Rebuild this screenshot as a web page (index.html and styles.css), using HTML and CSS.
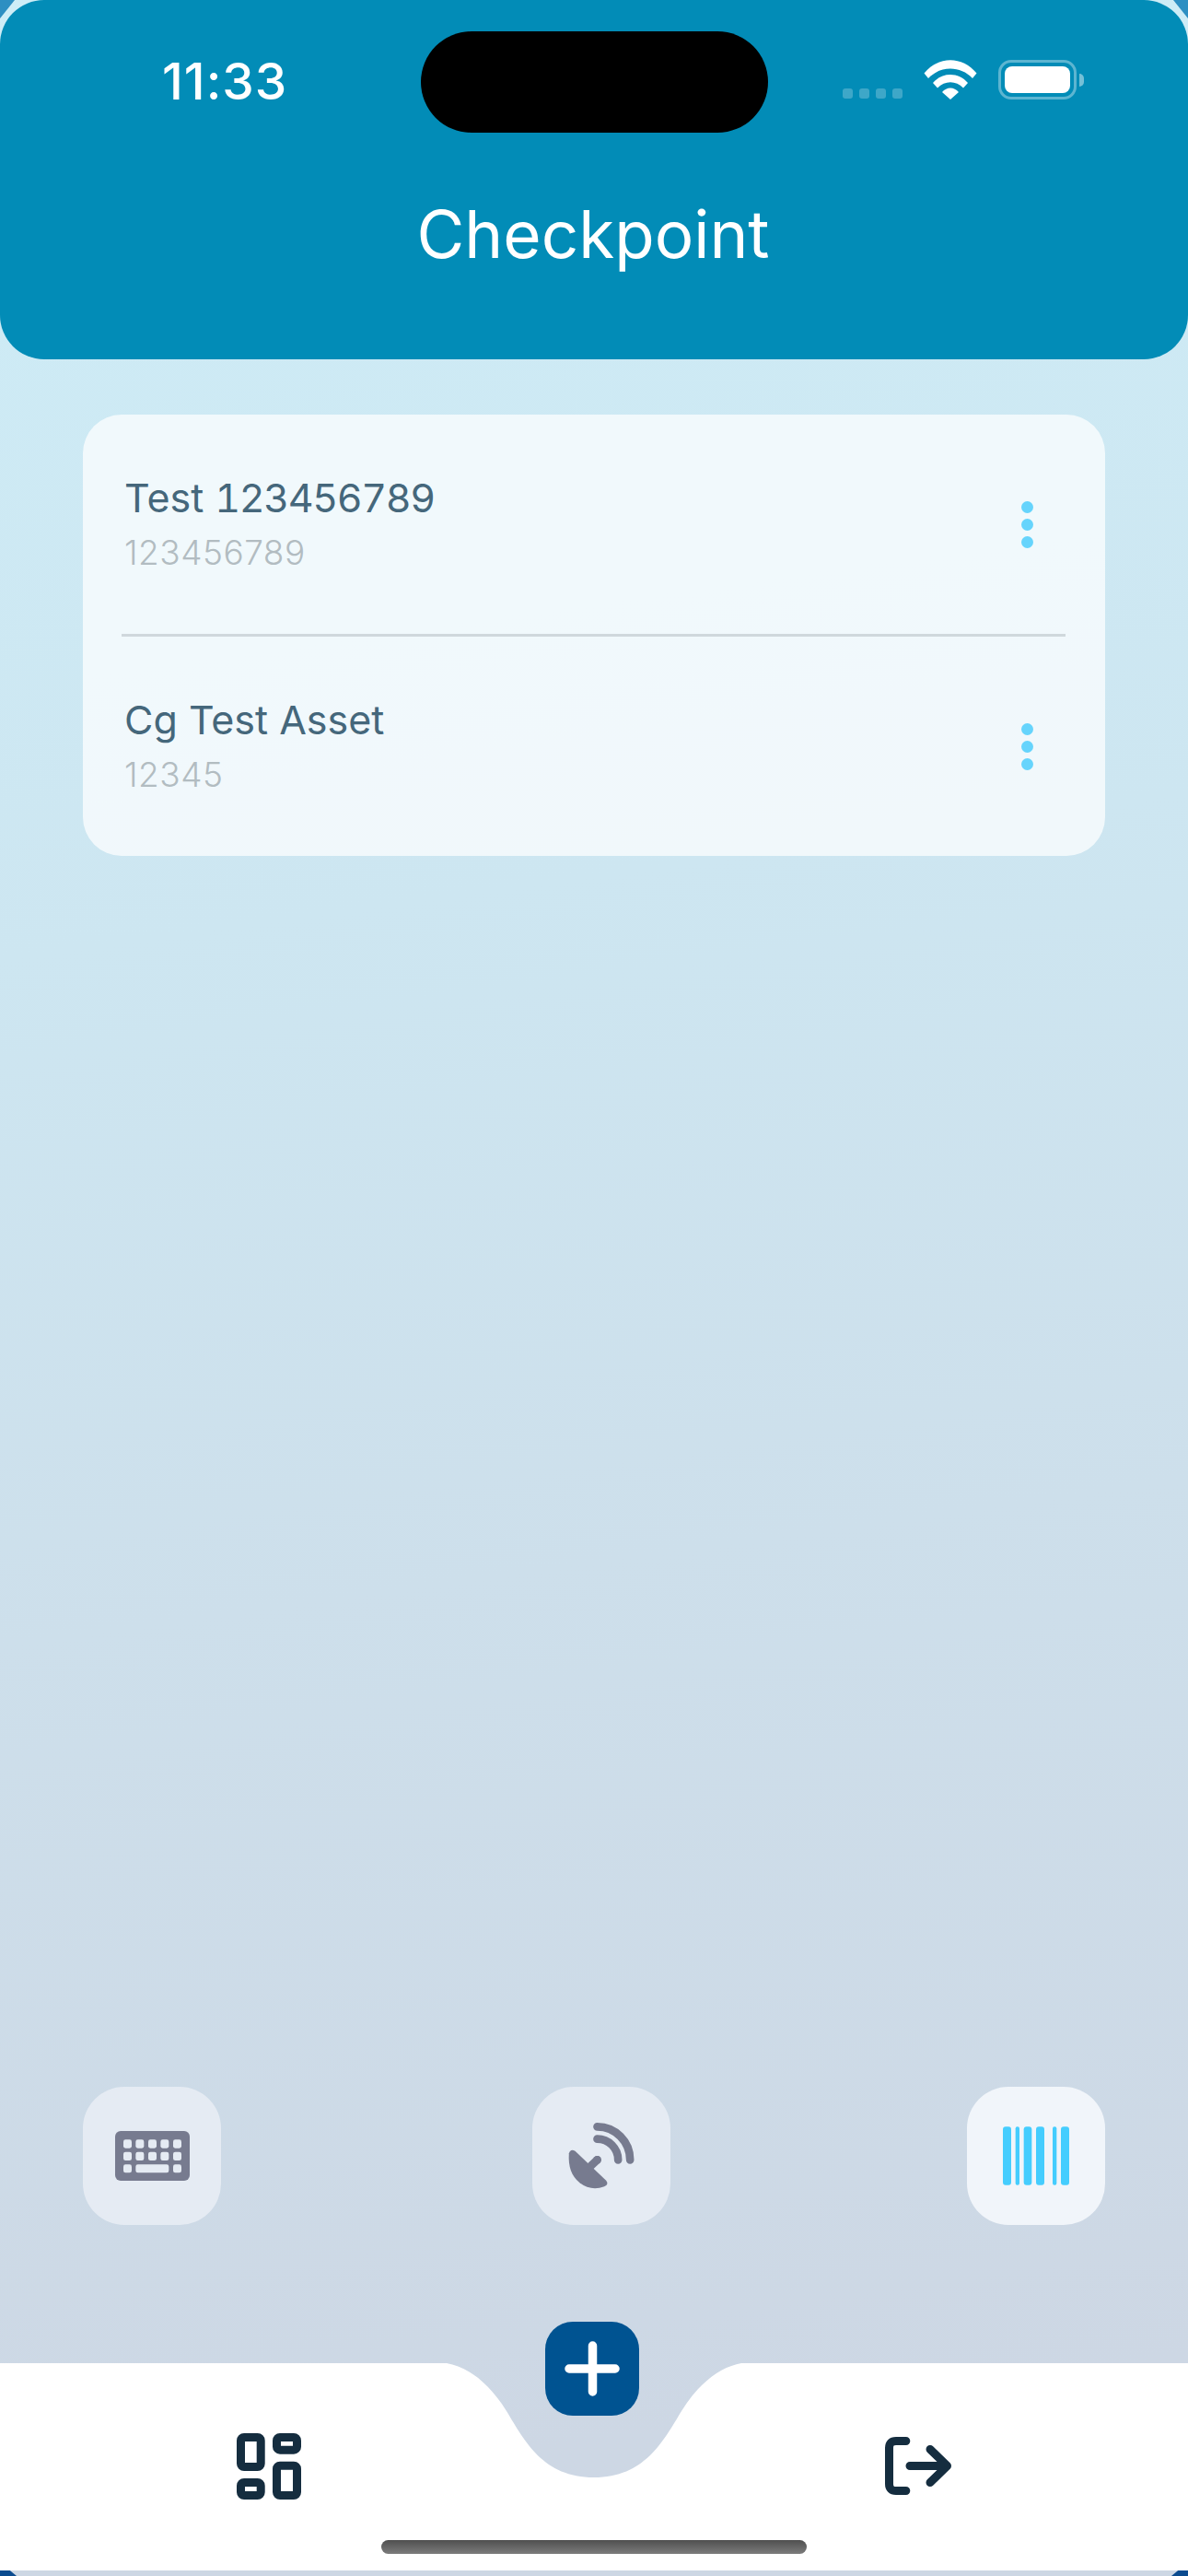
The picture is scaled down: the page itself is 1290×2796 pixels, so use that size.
FILE: index.html
```html
<!DOCTYPE html>
<html lang="en">
<head>
<meta charset="utf-8">
<title>Checkpoint</title>
<link rel="stylesheet" href="styles.css">
</head>
<body>
<div class="screen">
  <header class="header">
    <div class="status">
      <span class="time">11:33</span>
      <div class="island"></div>
      <div class="status-icons">
        <div class="signal"><i></i><i></i><i></i><i></i></div>
        <svg class="wifi" width="58" height="43" viewBox="0 0 58 43"><path fill="#fff" d="M0.5 14.5 C16 -4.5 42 -4.5 57.5 14.5 L53 20 C40 6 18 6 5 20 Z M10 25 C20 13 38 13 48 25 L43 30.5 C35 22 23 22 15 30.5 Z M20 35 C25 29 33 29 38 35 L29 43 Z"/></svg>
        <div class="battery"><div class="battery-body"><div class="battery-fill"></div></div><div class="battery-tip"></div></div>
      </div>
    </div>
    <h1 class="title">Checkpoint</h1>
  </header>

  <section class="card">
    <div class="row">
      <div class="row-text">
        <div class="row-name">Test <span class="digits">123456789</span></div>
        <div class="row-code">123456789</div>
      </div>
      <div class="dots"><i></i><i></i><i></i></div>
    </div>
    <div class="divider"></div>
    <div class="row">
      <div class="row-text">
        <div class="row-name">Cg Test Asset</div>
        <div class="row-code">12345</div>
      </div>
      <div class="dots"><i></i><i></i><i></i></div>
    </div>
  </section>

  <div class="actions">
    <button class="action">
      <svg width="81" height="54" viewBox="162 188 243 162">
        <rect class="ink" x="162" y="188" width="243" height="162" rx="18"/>
        <g class="key">
          <rect x="189" y="216" width="27" height="28" rx="7"/><rect x="229" y="216" width="27" height="28" rx="7"/><rect x="270" y="216" width="27" height="28" rx="7"/><rect x="310" y="216" width="27" height="28" rx="7"/><rect x="351" y="216" width="27" height="28" rx="7"/>
          <rect x="189" y="256" width="27" height="28" rx="7"/><rect x="229" y="256" width="27" height="28" rx="7"/><rect x="270" y="256" width="27" height="28" rx="7"/><rect x="310" y="256" width="27" height="28" rx="7"/><rect x="351" y="256" width="27" height="28" rx="7"/>
          <rect x="189" y="297" width="27" height="27" rx="7"/><rect x="229" y="297" width="108" height="27" rx="7"/><rect x="351" y="297" width="27" height="27" rx="7"/>
        </g>
      </svg>
    </button>
    <button class="action action-mid">
      <svg width="80" height="80" viewBox="158.5 150 240 240">
        <path class="ink" d="M173 262 Q178 245 193 254 L294 350 Q304 362 288 370 Q245 386 208 358 Q168 326 173 262 Z"/>
        <path class="wave" d="M245 302 L265 283"/>
        <circle class="ink" cx="265" cy="283" r="13"/>
        <path class="wave" d="M265 215 A68 68 0 0 1 333 283"/>
        <path class="wave" d="M265 175 A107 108 0 0 1 372 283"/>
      </svg>
    </button>
    <button class="action action-on">
      <svg width="72" height="64" viewBox="177 175 216 190">
        <g class="bars">
          <rect x="177" y="175" width="27" height="190" rx="9"/><rect x="218" y="175" width="13" height="190" rx="6"/><rect x="245" y="175" width="26" height="190" rx="9"/><rect x="285" y="175" width="27" height="190" rx="9"/><rect x="339" y="175" width="13" height="190" rx="6"/><rect x="366" y="175" width="27" height="190" rx="9"/>
        </g>
      </svg>
    </button>
  </div>

  <nav class="tabbar">
    <div class="tab tab-left">
      <svg width="70" height="72" viewBox="0 0 70 72">
        <g class="tab-ink">
          <rect x="4.5" y="4.5" width="21.7" height="32" rx="3.5"/>
          <rect x="43.5" y="4.5" width="22" height="13.7" rx="3.5"/>
          <rect x="4.5" y="53.5" width="21.7" height="14" rx="3.5"/>
          <rect x="43.5" y="35.2" width="22" height="32.3" rx="3.5"/>
        </g>
      </svg>
    </div>
    <div class="notch">
      <svg width="320" height="225" viewBox="0 0 320 225"><path fill="#fff" d="M0 0 C22 4 45 20 65 52 C85 85 105 124 160 124 C215 124 235 85 255 52 C275 20 298 4 320 0 V225 H0 Z"/></svg>
      <button class="fab">
        <svg width="60" height="60" viewBox="0 0 60 60"><path class="plus" d="M30.5 5 V55 M5 30 H55"/></svg>
      </button>
    </div>
    <div class="tab tab-right">
      <svg width="80" height="64" viewBox="0 0 80 64">
        <g class="tab-ink">
          <path d="M28.800 4.500 H18 Q10.500 4.500 10.500 12 V51 Q10.500 58.500 18 58.500 H28.800"/>
          <path d="M33 31.500 H73.500 M55 13.500 L73.500 31.500 L55 49.500"/>
        </g>
      </svg>
    </div>
    <div class="home-bar"></div>
  </nav>

  <i class="corner corner-tl"></i>
  <i class="corner corner-tr"></i>
  <i class="corner corner-bl"></i>
  <i class="corner corner-br"></i>
</div>
</body>
</html>
```

FILE: styles.css
```css
* { box-sizing: border-box; }
html, body { margin: 0; padding: 0; }
body { font-family: Inter, "Noto Sans", sans-serif; }

.screen {
  position: relative;
  width: 1290px;
  height: 2796px;
  overflow: hidden;
  display: flex;
  flex-direction: column;
  background: linear-gradient(172deg, #ceedf7 0%, #cde6f1 35%, #cddfeb 60%, #cdd7e4 92%);
}

.header {
  height: 390px;
  background: #028cb7;
  border-radius: 48px;
  color: #fff;
  flex: none;
  position: relative;
}
.status {
  height: 154px;
  padding-top: 55px;
  display: flex;
  align-items: flex-start;
  justify-content: space-between;
  position: relative;
}
.time {
  margin-left: 176px;
  font-size: 55px;
  line-height: 66px;
  font-weight: 500;
  letter-spacing: 1px;
}
.island {
  position: absolute;
  left: 457px;
  top: 34px;
  width: 377px;
  height: 110px;
  border-radius: 55px;
  background: #000;
}
.status-icons {
  display: flex;
  align-items: flex-start;
  margin-top: 10px;
  margin-right: 113px;
}
.signal {
  display: flex;
  gap: 7.300px;
  margin-top: 31px;
  margin-right: 23px;
}
.signal i {
  width: 10.700px;
  height: 11px;
  border-radius: 3px;
  background: rgba(255, 255, 255, 0.24);
}
.wifi { display: block; margin-right: 23px; }
.battery { display: flex; align-items: center; }
.battery-body {
  width: 85px;
  height: 43px;
  padding: 4px;
  border: 3px solid rgba(255, 255, 255, 0.36);
  border-radius: 14px;
}
.battery-fill {
  height: 100%;
  background: #fff;
  border-radius: 8px;
}
.battery-tip {
  width: 5px;
  height: 14px;
  margin-left: 3px;
  border-radius: 0 5px 5px 0;
  background: rgba(255, 255, 255, 0.45);
}
.title {
  margin: 57px 0 0;
  padding-right: 2px;
  font-size: 71px;
  line-height: 86px;
  font-weight: 400;
  text-align: center;
}

.card {
  flex: none;
  margin: 60px 90px 0;
  height: 479px;
  background: rgba(255, 255, 255, 0.72);
  border-radius: 42px;
  display: flex;
  flex-direction: column;
}
.row {
  height: 238px;
  padding: 0 78px 0 45px;
  display: flex;
  align-items: center;
  justify-content: space-between;
}
.row-text { padding-bottom: 3px; }
.row-name {
  font-size: 43px;
  line-height: 52px;
  color: #45677b;
}
.digits {
  font-variant-numeric: tabular-nums;
  letter-spacing: -1.400px;
}
.row-code {
  margin-top: 12px;
  font-size: 37px;
  line-height: 44px;
  font-weight: 300;
  letter-spacing: 0.5px;
  color: #b2bcc1;
}
.divider {
  height: 3px;
  margin: 0 43px 0 42px;
  background: #d0d8dc;
}
.dots { display: flex; flex-direction: column; gap: 6px; }
.dots i {
  width: 13px;
  height: 13px;
  border-radius: 50%;
  background: #66d4fc;
}

.actions {
  margin: auto 90px 150px;
  display: flex;
  justify-content: space-between;
}
.action {
  width: 150px;
  height: 150px;
  padding: 0;
  border: 0;
  border-radius: 45px;
  background: #e5ebf3;
  display: flex;
  align-items: center;
  justify-content: center;
}
.action-mid { margin-left: 16px; }
.action-on { background: #f1f5fa; }
.ink { fill: #777b8f; }
.key rect { fill: #e5ebf3; }
.wave { fill: none; stroke: #777b8f; stroke-width: 26; stroke-linecap: round; }
.bars rect { fill: #45cdfe; }

.tabbar {
  position: relative;
  flex: none;
  height: 225px;
  margin-bottom: 6px;
  display: flex;
}
.tab {
  width: 485px;
  background: #fff;
  display: flex;
  align-items: flex-start;
}
.tab-left { padding: 76px 0 0 257px; }
.tab-right { padding: 80px 0 0 150px; }
.tab-ink { fill: none; stroke: #152d3f; stroke-width: 9; stroke-linecap: round; stroke-linejoin: round; }
.notch { position: relative; width: 320px; height: 225px; }
.notch svg { display: block; }
.fab {
  position: absolute;
  left: 107px;
  top: -45px;
  width: 102px;
  height: 102px;
  padding: 0;
  border: 0;
  border-radius: 30px;
  background: #005391;
  display: flex;
  align-items: center;
  justify-content: center;
}
.plus { fill: none; stroke: #fff; stroke-width: 9.500; stroke-linecap: round; }
.home-bar {
  position: absolute;
  left: 414px;
  top: 192px;
  width: 462px;
  height: 15px;
  border-radius: 8px;
  background: linear-gradient(180deg, #4f4f4f, #7c7c7c);
}

.corner { position: absolute; display: block; }
.corner-tl, .corner-tr { top: 0; width: 16px; height: 20px; background: #2d8fc2; }
.corner-tl { left: 0; clip-path: polygon(0 0, 100% 0, 0 100%); }
.corner-tr { right: 0; clip-path: polygon(0 0, 100% 0, 100% 100%); }
.corner-bl, .corner-br { bottom: 0; width: 18px; height: 6px; background: #0b4b8f; }
.corner-bl { left: 0; clip-path: polygon(0 0, 60% 0, 100% 100%, 0 100%); }
.corner-br { right: 0; clip-path: polygon(40% 0, 100% 0, 100% 100%, 0 100%); }
```
